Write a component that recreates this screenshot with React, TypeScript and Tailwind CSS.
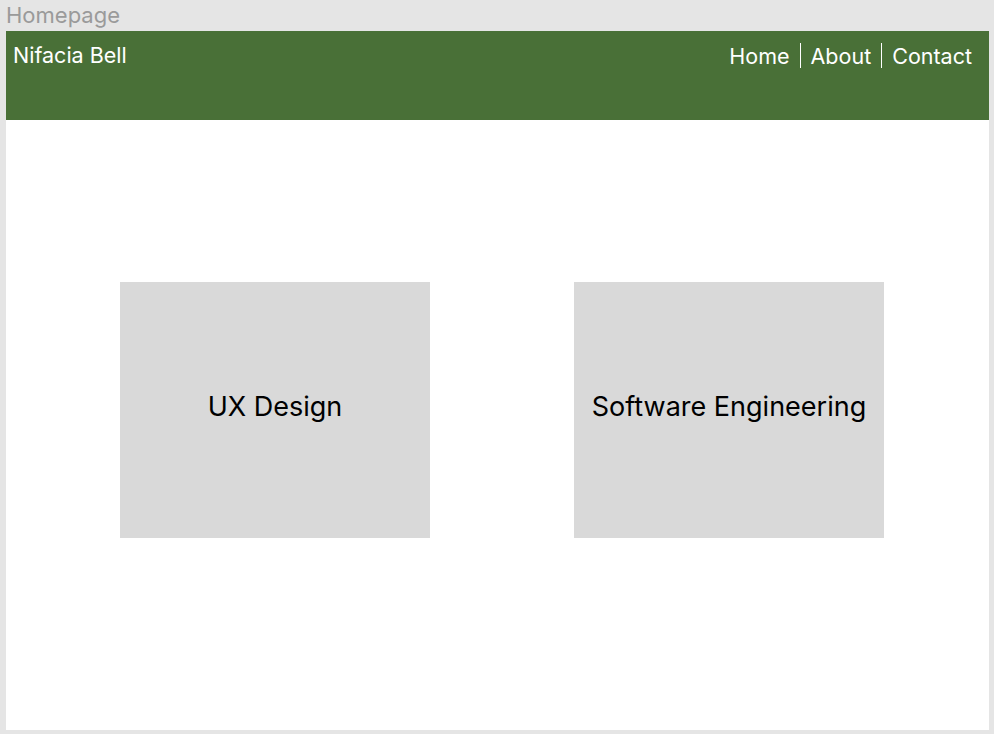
export default function App() {
  const font = { fontFamily: 'Inter, "Noto Sans", sans-serif' };
  return (
    <div className="w-[994px] h-[734px] bg-[#e5e5e5] overflow-hidden" style={font}>
      <div className="h-[31px] pl-[6px] pt-[2px] text-[22px] leading-[26px] text-[#9a9a9a]">Homepage</div>
      <div className="ml-[6px] w-[983px] h-[699px] bg-white">
        <header className="h-[89px] bg-[#497037] flex justify-between items-start pl-[7px] pr-[17px] pt-[12px] text-white text-[21.5px] leading-[24px]">
          <div>Nifacia Bell</div>
          <nav className="flex items-center">
            <span>Home</span>
            <span className="mx-[10px] w-px h-[25px] bg-white" />
            <span>About</span>
            <span className="mx-[10px] w-px h-[25px] bg-white" />
            <span>Contact</span>
          </nav>
        </header>
        <div className="flex pl-[114px] pt-[162px] gap-[144px]">
          <div className="w-[310px] h-[256px] bg-[#d9d9d9] flex items-center justify-center pb-[6px] text-[27px] text-black">UX Design</div>
          <div className="w-[310px] h-[256px] bg-[#d9d9d9] flex items-center justify-center pb-[6px] text-[27px] text-black">Software Engineering</div>
        </div>
      </div>
    </div>
  );
}
